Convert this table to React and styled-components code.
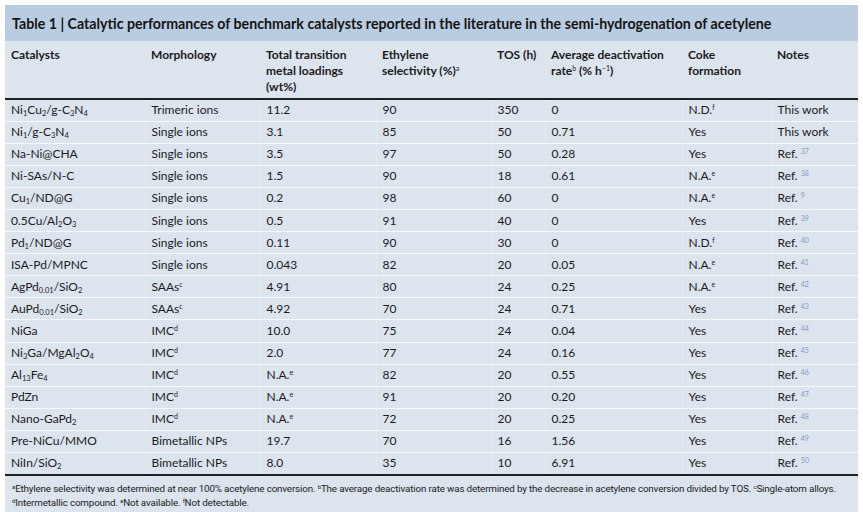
import React from "react";
import styled, { createGlobalStyle } from "styled-components";

const GlobalStyle = createGlobalStyle`
  html, body {
    margin: 0;
    padding: 0;
    background: #ffffff;
  }
  body {
    font-family: Lato, "Open Sans", sans-serif;
    color: #1b1b1b;
  }
`;

const columnWidths = [140, 115, 116, 115, 54, 137, 89, 87];

const S = ({ children }) => <Sub>{children}</Sub>;
const Sp = ({ children }) => <Sup>{children}</Sup>;

const rows = [
  [<>Ni<S>1</S>Cu<S>2</S>/g-C<S>3</S>N<S>4</S></>, "Trimeric ions", "11.2", "90", "350", "0", <>N.D.<Sp>f</Sp></>, "This work"],
  [<>Ni<S>1</S>/g-C<S>3</S>N<S>4</S></>, "Single ions", "3.1", "85", "50", "0.71", "Yes", "This work"],
  ["Na-Ni@CHA", "Single ions", "3.5", "97", "50", "0.28", "Yes", 37],
  ["Ni-SAs/N-C", "Single ions", "1.5", "90", "18", "0.61", <>N.A.<Sp>e</Sp></>, 38],
  [<>Cu<S>1</S>/ND@G</>, "Single ions", "0.2", "98", "60", "0", <>N.A.<Sp>e</Sp></>, 9],
  [<>0.5Cu/Al<S>2</S>O<S>3</S></>, "Single ions", "0.5", "91", "40", "0", "Yes", 39],
  [<>Pd<S>1</S>/ND@G</>, "Single ions", "0.11", "90", "30", "0", <>N.D.<Sp>f</Sp></>, 40],
  ["ISA-Pd/MPNC", "Single ions", "0.043", "82", "20", "0.05", <>N.A.<Sp>e</Sp></>, 41],
  [<>AgPd<S>0.01</S>/SiO<S>2</S></>, <>SAAs<Sp>c</Sp></>, "4.91", "80", "24", "0.25", <>N.A.<Sp>e</Sp></>, 42],
  [<>AuPd<S>0.01</S>/SiO<S>2</S></>, <>SAAs<Sp>c</Sp></>, "4.92", "70", "24", "0.71", "Yes", 43],
  ["NiGa", <>IMC<Sp>d</Sp></>, "10.0", "75", "24", "0.04", "Yes", 44],
  [<>Ni<S>3</S>Ga/MgAl<S>2</S>O<S>4</S></>, <>IMC<Sp>d</Sp></>, "2.0", "77", "24", "0.16", "Yes", 45],
  [<>Al<S>13</S>Fe<S>4</S></>, <>IMC<Sp>d</Sp></>, <>N.A.<Sp>e</Sp></>, "82", "20", "0.55", "Yes", 46],
  ["PdZn", <>IMC<Sp>d</Sp></>, <>N.A.<Sp>e</Sp></>, "91", "20", "0.20", "Yes", 47],
  [<>Nano-GaPd<S>2</S></>, <>IMC<Sp>d</Sp></>, <>N.A.<Sp>e</Sp></>, "72", "20", "0.25", "Yes", 48],
  ["Pre-NiCu/MMO", "Bimetallic NPs", "19.7", "70", "16", "1.56", "Yes", 49],
  [<>NiIn/SiO<S>2</S></>, "Bimetallic NPs", "8.0", "35", "10", "6.91", "Yes", 50],
];

// last column: numbers become "Ref. n" with a tinted reference number
function Note({ value }) {
  if (typeof value === "number") {
    return (
      <>
        Ref. <RefNum>{value}</RefNum>
      </>
    );
  }
  return value;
}

export default function App() {
  return (
    <>
      <GlobalStyle />
      <Panel>
        <Title>
          Table 1 | Catalytic performances of benchmark catalysts reported in the literature in the semi-hydrogenation of acetylene
        </Title>
        <Table>
          <colgroup>
            {columnWidths.map((w, i) => (
              <col key={i} style={{ width: w }} />
            ))}
          </colgroup>
          <thead>
            <tr>
              <Th>Catalysts</Th>
              <Th>Morphology</Th>
              <Th>
                Total transition
                <br />
                metal loadings
                <br />
                (wt%)
              </Th>
              <Th>
                Ethylene
                <br />
                selectivity (%)<HeadSup>a</HeadSup>
              </Th>
              <Th>TOS (h)</Th>
              <Th>
                Average deactivation
                <br />
                rate<HeadSup>b</HeadSup> (% h<HeadSup>−1</HeadSup>)
              </Th>
              <Th>
                Coke
                <br />
                formation
              </Th>
              <Th>Notes</Th>
            </tr>
          </thead>
          <tbody>
            {rows.map((r, i) => (
              <tr key={i}>
                {r.map((cell, j) => (
                  <Td key={j} $last={i === rows.length - 1}>
                    {j === 7 ? <Note value={cell} /> : cell}
                  </Td>
                ))}
              </tr>
            ))}
          </tbody>
        </Table>
        <Footnotes>
          <p>
            <FootSup>a</FootSup>Ethylene selectivity was determined at near 100% acetylene conversion.{" "}
            <FootSup>b</FootSup>The average deactivation rate was determined by the decrease in acetylene conversion divided by TOS.{" "}
            <FootSup>c</FootSup>Single-atom alloys.
          </p>
          <p>
            <FootSup>d</FootSup>Intermetallic compound. <FootSup>e</FootSup>Not available. <FootSup>f</FootSup>Not detectable.
          </p>
        </Footnotes>
      </Panel>
    </>
  );
}

const Panel = styled.div`
  margin: 5px 5px 0 5px;
  width: 853px;
  height: 507px;
  background: #dce4ee;
  overflow: hidden;
`;

const Title = styled.div`
  height: 36px;
  box-sizing: border-box;
  padding: 11px 0 0 7px;
  background: #bacce1;
  font-size: 14.2px;
  font-weight: 700;
  color: #141414;
  white-space: nowrap;
  line-height: 16px;
`;

const Table = styled.table`
  width: 853px;
  table-layout: fixed;
  border-collapse: collapse;
  border-bottom: 2px solid #1f1f1f;
`;

const Th = styled.th`
  height: 58px;
  box-sizing: border-box;
  padding: 6px 0 0 6px;
  text-align: left;
  vertical-align: top;
  font-size: 12px;
  font-weight: 700;
  line-height: 16px;
  color: #1a1a1a;
  border-bottom: 2px solid #1f1f1f;
  white-space: nowrap;
`;

const Td = styled.td`
  height: 22.1px;
  box-sizing: border-box;
  padding: 0 0 0 6px;
  font-size: 12px;
  line-height: 20px;
  color: #1b1b1b;
  white-space: nowrap;
  vertical-align: middle;
  border-bottom: ${(p) => (p.$last ? "none" : "1.5px solid #f6f8fb")};
  border-left: 1px solid #e3e9f1;
  &:first-child {
    border-left: none;
  }
`;

const Sub = styled.sub`
  font-size: 7.5px;
  line-height: 0;
  vertical-align: -2px;
`;

const Sup = styled.sup`
  font-size: 7px;
  line-height: 0;
  vertical-align: 4px;
`;

const HeadSup = styled.sup`
  font-size: 7px;
  font-weight: 400;
  line-height: 0;
  vertical-align: 4px;
`;

const RefNum = styled.sup`
  font-size: 7px;
  line-height: 0;
  vertical-align: 4px;
  color: #7f9cc3;
`;

const Footnotes = styled.div`
  padding: 6px 0 0 7px;
  font-family: Roboto, sans-serif;
  font-size: 9.8px;
  line-height: 14px;
  color: #1b1b1b;
  letter-spacing: -0.15px;
  & p {
    margin: 0;
    white-space: nowrap;
  }
`;

const FootSup = styled.sup`
  font-size: 6px;
  line-height: 0;
  vertical-align: 3px;
`;
